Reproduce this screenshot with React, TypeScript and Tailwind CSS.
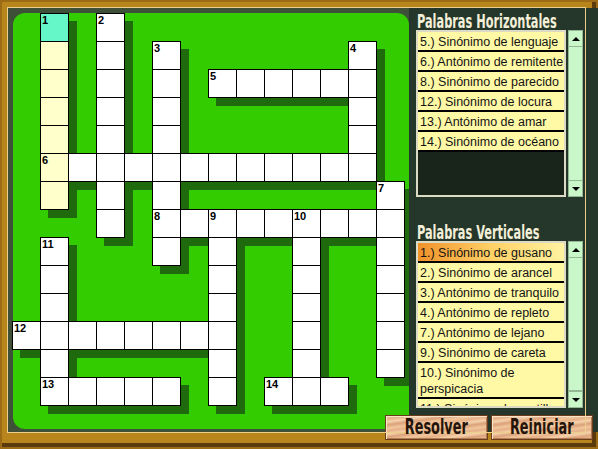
import type { ReactNode } from 'react'

type Dir = 'across' | 'down'

interface Word {
  n: number
  col: number
  row: number
  dir: Dir
  len: number
}

interface Cell {
  col: number
  row: number
  num?: number
  fill: 'white' | 'active' | 'selected'
}

const WORDS: Word[] = [
  { n: 1, col: 1, row: 0, dir: 'down', len: 7 },
  { n: 2, col: 3, row: 0, dir: 'down', len: 8 },
  { n: 3, col: 5, row: 1, dir: 'down', len: 8 },
  { n: 4, col: 12, row: 1, dir: 'down', len: 5 },
  { n: 5, col: 7, row: 2, dir: 'across', len: 6 },
  { n: 6, col: 1, row: 5, dir: 'across', len: 12 },
  { n: 7, col: 13, row: 6, dir: 'down', len: 7 },
  { n: 8, col: 5, row: 7, dir: 'across', len: 9 },
  { n: 9, col: 7, row: 7, dir: 'down', len: 7 },
  { n: 10, col: 10, row: 7, dir: 'down', len: 7 },
  { n: 11, col: 1, row: 8, dir: 'down', len: 6 },
  { n: 12, col: 0, row: 11, dir: 'across', len: 8 },
  { n: 13, col: 1, row: 13, dir: 'across', len: 5 },
  { n: 14, col: 9, row: 13, dir: 'across', len: 3 },
]

const ACTIVE_WORD = 1

const HORIZONTAL = [
  '5.) Sinónimo de lenguaje',
  '6.) Antónimo de remitente',
  '8.) Sinónimo de parecido',
  '12.) Sinónimo de locura',
  '13.) Antónimo de amar',
  '14.) Sinónimo de océano',
]

const VERTICAL = [
  '1.) Sinónimo de gusano',
  '2.) Sinónimo de arancel',
  '3.) Antónimo de tranquilo',
  '4.) Antónimo de repleto',
  '7.) Antónimo de lejano',
  '9.) Sinónimo de careta',
  '10.) Sinónimo de perspicacia',
  '11.) Sinónimo de castillo',
]

function buildCells(): Cell[] {
  const map = new Map<string, Cell>()
  for (const w of WORDS) {
    for (let i = 0; i < w.len; i++) {
      const col = w.dir === 'across' ? w.col + i : w.col
      const row = w.dir === 'down' ? w.row + i : w.row
      const key = `${col},${row}`
      const cell = map.get(key) ?? { col, row, fill: 'white' as const }
      if (i === 0) cell.num = w.n
      if (w.n === ACTIVE_WORD) cell.fill = i === 0 ? 'selected' : 'active'
      map.set(key, cell)
    }
  }
  return [...map.values()]
}

const CELLS = buildCells()

const fillClass = {
  white: 'bg-white',
  active: 'bg-[#ffffcc]',
  selected: 'bg-[#66f7c9]',
}

function Crossword() {
  return (
    <div className="-ml-px grid grid-cols-[repeat(15,28px)] grid-rows-[repeat(15,28px)]">
      {CELLS.map((c) => (
        <div
          key={`s-${c.col}-${c.row}`}
          className="ml-[8px] mt-[8px] h-[29px] w-[29px] bg-[#1f6a0c]"
          style={{ gridColumnStart: c.col + 1, gridRowStart: c.row + 1 }}
        />
      ))}
      {CELLS.map((c) => (
        <div
          key={`c-${c.col}-${c.row}`}
          className={`h-[29px] w-[29px] border border-black pl-px pt-px ${fillClass[c.fill]}`}
          style={{ gridColumnStart: c.col + 1, gridRowStart: c.row + 1 }}
        >
          {c.num ? (
            <span className="block text-[11px] font-bold leading-[10px] text-black">{c.num}</span>
          ) : null}
        </div>
      ))}
    </div>
  )
}

function ScrollBar({ thumb = false }: { thumb?: boolean }) {
  return (
    <div className="flex h-full w-[15px] flex-col border border-[#93b893] bg-[#c9f7c9]">
      <div className="flex h-[16px] items-center justify-center border-b border-[#93b893]">
        <span className="h-0 w-0 border-x-[4px] border-b-[4px] border-x-transparent border-b-black" />
      </div>
      <div className="flex-1">
        {thumb ? <div className="h-full border-b border-[#93b893]" /> : null}
      </div>
      <div className="flex h-[16px] items-center justify-center border-t border-[#93b893]">
        <span className="h-0 w-0 border-x-[4px] border-t-[4px] border-x-transparent border-t-black" />
      </div>
    </div>
  )
}

function ClueList({ clues, highlight, thumb }: { clues: string[]; highlight?: number; thumb?: boolean }) {
  return (
    <div className="flex h-[167px] shrink-0 gap-[2px]">
      <div className="w-[150px] overflow-hidden border-2 border-[#dcd9c4] bg-[#19251b]">
        {clues.map((clue, i) => (
          <div
            key={clue}
            className={`border-b-2 border-black pl-[2px] pt-[2px] text-[12.5px] leading-[16px] text-[#141414] ${
              clue.length > 26 ? '' : 'whitespace-nowrap'
            } ${
              i === highlight
                ? 'bg-[linear-gradient(90deg,#f0922a,#ffd066_50%,#fff3a0)]'
                : 'bg-[#fff9a6]'
            }`}
          >
            {clue}
          </div>
        ))}
      </div>
      <ScrollBar thumb={thumb} />
    </div>
  )
}

function PanelTitle({ children }: { children: ReactNode }) {
  return (
    <div className="h-[22px] shrink-0 pl-px font-['DejaVu_Sans_Condensed','DejaVu_Sans',sans-serif] text-[20px] font-bold leading-[26px] text-[#f3efd8]">
      <span className="inline-block origin-left scale-x-[0.63] whitespace-nowrap">{children}</span>
    </div>
  )
}

function WoodButton({ label, width }: { label: string; width: string }) {
  return (
    <button
      type="button"
      className={`${width} flex h-[25px] items-center justify-center overflow-hidden border border-[#6a3d1c] bg-[repeating-linear-gradient(172deg,#f2c8a0_0px,#e6b187_3px,#f5d2ad_6px,#dba27a_9px,#efc299_12px)] shadow-[inset_1px_1px_0_#fbe3c8,inset_-1px_-1px_0_#b27a52] font-['DejaVu_Sans_Condensed','DejaVu_Sans',sans-serif] text-[21px] font-bold leading-none text-[#24140a]`}
    >
      <span className="inline-block scale-x-[0.68] whitespace-nowrap">{label}</span>
    </button>
  )
}

export default function App() {
  return (
    <div className="relative h-[449px] w-[598px] overflow-hidden bg-[#b8841c] pb-[17px] pl-[8px] pr-[13px] pt-[8px] font-['Liberation_Sans',Arial,sans-serif] shadow-[inset_0_0_0_2px_#9c6b15,inset_-6px_-6px_0_#5b3a0d]">
      <div className="flex h-full w-full outline outline-[#ecd08a]">
        <div className="h-full w-[401px] shrink-0 bg-[#3e5037] pb-[3px] pl-[5px] pt-[5px]">
          <div className="h-full rounded-[12px] bg-[#33cc00]">
            <Crossword />
          </div>
        </div>

        <div className="flex flex-1 flex-col bg-[#25372a] pl-[7px]">
          <PanelTitle>Palabras Horizontales</PanelTitle>
          <ClueList clues={HORIZONTAL} />

          <div className="mt-[22px] shrink-0">
            <PanelTitle>Palabras Verticales</PanelTitle>
          </div>
          <ClueList clues={VERTICAL} highlight={0} thumb />

          <div className="-ml-[31px] mt-[7px] flex w-[208px] shrink-0 gap-[3px]">
            <WoodButton label="Resolver" width="w-[103px]" />
            <WoodButton label="Reiniciar" width="w-[102px]" />
          </div>
        </div>
      </div>
    </div>
  )
}
